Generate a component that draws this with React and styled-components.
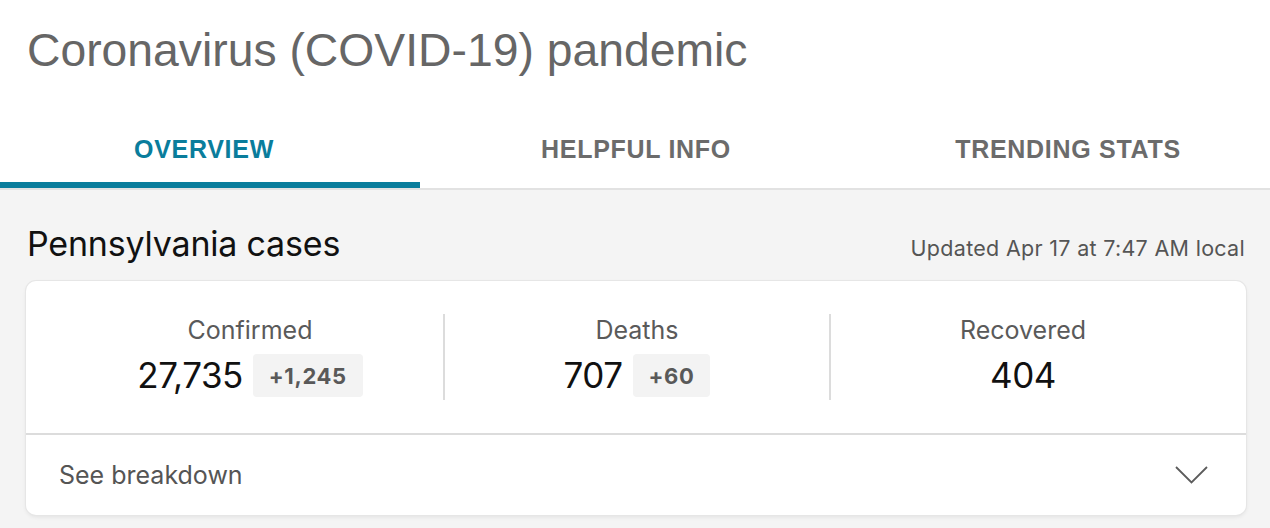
import React from "react";
import styled, { createGlobalStyle } from "styled-components";

const Global = createGlobalStyle`
  html, body { margin: 0; padding: 0; background: #ffffff; }
  body { font-family: Inter, "Liberation Sans", Arial, sans-serif; -webkit-font-smoothing: antialiased; }
  * { box-sizing: border-box; }
`;

const Page = styled.div`
  width: 1270px;
  height: 528px;
  overflow: hidden;
  display: flex;
  flex-direction: column;
  background: #fff;
`;

const Header = styled.header`
  padding: 22px 27px 0;
  height: 113px;
`;

const Title = styled.h1`
  margin: 0;
  font-family: "Liberation Sans", Arial, sans-serif;
  font-weight: 400;
  font-size: 46.3px;
  line-height: 56px;
  color: #666;
`;

const TabBar = styled.nav`
  display: grid;
  grid-template-columns: 420px 432px 1fr;
  border-bottom: 2px solid #e2e2e2;
`;

const Tab = styled.div`
  height: 75px;
  padding-top: 3px;
  padding-bottom: ${(p) => (p.$active ? "0" : "6px")};
  border-bottom: ${(p) => (p.$active ? "6px solid #0a7d9c" : "none")};
  display: flex;
  align-items: center;
  justify-content: center;
  font-family: "Liberation Sans", Arial, sans-serif;
  font-weight: 700;
  font-size: 25px;
  letter-spacing: 0.7px;
  color: ${(p) => (p.$active ? "#0a7d9c" : "#6b6b6b")};
  margin-left: ${(p) => p.$offset || 0}px;
`;

const Body = styled.section`
  flex: 1;
  background: #f4f4f4;
  padding: 34px 24px 0 26px;
`;

const Heading = styled.div`
  display: flex;
  justify-content: space-between;
  align-items: baseline;
  padding: 0 1px;
  margin-bottom: 17px;
`;

const Region = styled.h2`
  margin: 0;
  font-weight: 400;
  font-size: 34px;
  line-height: 40px;
  color: #111;
  letter-spacing: -0.2px;
`;

const Updated = styled.span`
  font-size: 21.5px;
  color: #555;
  letter-spacing: 0.3px;
`;

const Card = styled.div`
  width: 1220px;
  background: #fff;
  border-radius: 10px;
  box-shadow: 0 0 0 1px #e6e6e6, 0 2px 4px rgba(0, 0, 0, 0.08);
  overflow: hidden;
`;

const Stats = styled.div`
  display: grid;
  grid-template-columns: repeat(3, 1fr);
  padding: 33px 31px 33px;
  border-bottom: 2px solid #dcdcdc;
`;

const Stat = styled.div`
  height: 86px;
  display: flex;
  flex-direction: column;
  align-items: center;
  border-left: ${(p) => (p.$divider ? "2px solid #dcdcdc" : "none")};
`;

const Label = styled.div`
  font-size: 25px;
  line-height: 30px;
  color: #5a5a5a;
  margin-top: 1px;
`;

const Values = styled.div`
  display: flex;
  align-items: center;
  gap: 10px;
  margin-top: 9px;
`;

const Value = styled.span`
  font-size: 35px;
  line-height: 43px;
  color: #111;
  letter-spacing: -0.5px;
`;

const Delta = styled.span`
  height: 43px;
  padding: 0 16px;
  display: inline-flex;
  align-items: center;
  background: #f3f3f3;
  border-radius: 4px;
  font-size: 22px;
  font-weight: 700;
  letter-spacing: 0.6px;
  color: #595959;
`;

const Footer = styled.div`
  height: 80px;
  display: flex;
  align-items: center;
  justify-content: space-between;
  padding: 0 38px 0 33px;
`;

const FooterText = styled.span`
  font-size: 25px;
  color: #555;
`;

const Chevron = () => (
  <svg width="33" height="18" viewBox="0 0 33 18" fill="none">
    <path d="M1 1 L16.5 16.5 L32 1" stroke="#5c5c5c" strokeWidth="1.8" />
  </svg>
);

const stats = [
  { label: "Confirmed", value: "27,735", delta: "+1,245" },
  { label: "Deaths", value: "707", delta: "+60" },
  { label: "Recovered", value: "404" },
];

export default function App() {
  return (
    <Page>
      <Global />
      <Header>
        <Title>Coronavirus (COVID-19) pandemic</Title>
      </Header>
      <TabBar>
        <Tab $active $offset={-12}>OVERVIEW</Tab>
        <Tab>HELPFUL INFO</Tab>
        <Tab $offset={14}>TRENDING STATS</Tab>
      </TabBar>
      <Body>
        <Heading>
          <Region>Pennsylvania cases</Region>
          <Updated>Updated Apr 17 at 7:47 AM local</Updated>
        </Heading>
        <Card>
          <Stats>
            {stats.map((s, i) => (
              <Stat key={s.label} $divider={i > 0}>
                <Label>{s.label}</Label>
                <Values>
                  <Value>{s.value}</Value>
                  {s.delta && <Delta>{s.delta}</Delta>}
                </Values>
              </Stat>
            ))}
          </Stats>
          <Footer>
            <FooterText>See breakdown</FooterText>
            <Chevron />
          </Footer>
        </Card>
      </Body>
    </Page>
  );
}
